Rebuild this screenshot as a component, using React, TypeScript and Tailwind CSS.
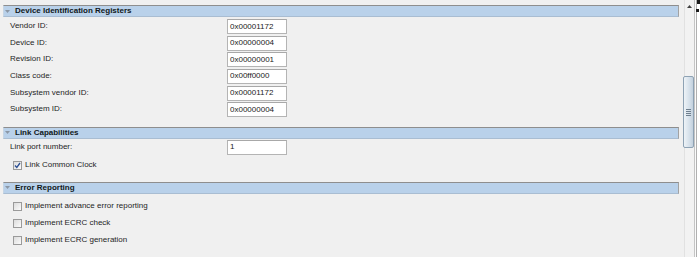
import React from 'react';

const font = { fontFamily: '"Liberation Sans", Arial, sans-serif' };

const SectionHeader: React.FC<{ title: string; className?: string }> = ({ title, className = '' }) => (
  <div
    className={`h-[12px] flex items-center bg-[#b9d1ea] border-t border-t-[#8e8e8e] border-r border-r-[#a2a2a2] border-b border-b-[#a9bdd2] border-l border-l-[#c6d5e4] ${className}`}
  >
    <svg width="5" height="3" viewBox="0 0 5 3" className="ml-[1px] mr-[5px]">
      <path d="M0 0H5L2.5 3Z" fill="#8b97a5" />
    </svg>
    <span className="text-[8px] leading-[10px] font-bold text-[#101820]">{title}</span>
  </div>
);

const FieldRow: React.FC<{ label: string; value: string; className?: string }> = ({ label, value, className = '' }) => (
  <div className={`h-[16.67px] flex items-start ${className}`}>
    <div className="w-[224px] pl-[7px] text-[8px] leading-[10px] text-[#1e1e1e] mt-[2px]">{label}</div>
    <div className="w-[60px] h-[15px] bg-white border border-[#b4b4b4] border-t-[#a8a8a8] flex items-center pl-[2px] text-[8px] leading-[10px] text-[#1a1a1a]">
      {value}
    </div>
  </div>
);

const Check: React.FC<{ label: string; checked?: boolean; className?: string }> = ({ label, checked, className = '' }) => (
  <div className={`h-[9px] flex items-center pl-[10px] ${className}`}>
    <div className="w-[9px] h-[9px] border border-[#9a9a9a] bg-[linear-gradient(135deg,#dcdcdc,#fbfbfb)] flex items-center justify-center">
      {checked && (
        <svg width="7" height="7" viewBox="0 0 7 7">
          <path d="M1 3.5L2.8 5.5L6 1" stroke="#2c4f93" strokeWidth="1.3" fill="none" />
        </svg>
      )}
    </div>
    <span className="ml-[3px] text-[8px] leading-[10px] text-[#1e1e1e]">{label}</span>
  </div>
);

const registers = [
  ['Vendor ID:', '0x00001172'],
  ['Device ID:', '0x00000004'],
  ['Revision ID:', '0x00000001'],
  ['Class code:', '0x00ff0000'],
  ['Subsystem vendor ID:', '0x00001172'],
  ['Subsystem ID:', '0x00000004'],
];

export default function App() {
  return (
    <div className="w-[700px] h-[257px] bg-[#f0f0f0] flex overflow-hidden" style={font}>
      {/* form area */}
      <div className="w-[683px] pl-[3px] pr-[4px] pt-[5px] flex flex-col">
        <SectionHeader title="Device Identification Registers" />
        <div className="mt-[2px] flex flex-col">
          {registers.map(([l, v]) => (
            <FieldRow key={l} label={l} value={v} />
          ))}
        </div>

        <SectionHeader title="Link Capabilities" className="mt-[8px]" />
        <FieldRow label="Link port number:" value="1" className="mt-[1px]" />
        <Check label="Link Common Clock" checked className="mt-[4px]" />

        <SectionHeader title="Error Reporting" className="mt-[12px]" />
        <div className="mt-[8px] flex flex-col gap-[8px]">
          <Check label="Implement advance error reporting" />
          <Check label="Implement ECRC check" />
          <Check label="Implement ECRC generation" />
        </div>
      </div>

      {/* scrollbar */}
      <div className="w-[11px] flex flex-col bg-[linear-gradient(to_right,#f0f0f0_1px,#e1e1e1_1px,#e1e1e1_2px,#f2f2f2_2px)]">
        <svg width="5" height="3" viewBox="0 0 5 3" className="mt-[5px] ml-[4px]">
          <path d="M0 3H5L2.5 0Z" fill="#404040" />
        </svg>
        <div className="mt-[68px] w-[11px] h-[72px] rounded-[2px] border border-[#8ea2b4] bg-[linear-gradient(to_right,#eef3f7,#d5e0ea_60%,#c3d1de)] flex items-center justify-center">
          <div className="w-[5px] flex flex-col gap-[1px]">
            <div className="h-[1px] bg-[#6f7f8e]" />
            <div className="h-[1px] bg-[#6f7f8e]" />
            <div className="h-[1px] bg-[#6f7f8e]" />
            <div className="h-[1px] bg-[#6f7f8e]" />
          </div>
        </div>
      </div>

      {/* window edge */}
      <div className="w-[1px] bg-[#c4c4c4]" />
      <div className="w-[1px] bg-[#fafafa]" />
      <div className="w-[1px] bg-[#b0b0b0] flex flex-col">
        <div className="h-[9px]" />
        <div className="h-[3px] bg-[#202020]" />
      </div>
      <div className="w-[3px] bg-white flex flex-col">
        <div className="h-[4px] bg-[#1a1a1a]" />
        <div className="h-[5px]" />
        <div className="h-[3px] w-[2px] bg-[#1a1a1a]" />
      </div>
    </div>
  );
}
